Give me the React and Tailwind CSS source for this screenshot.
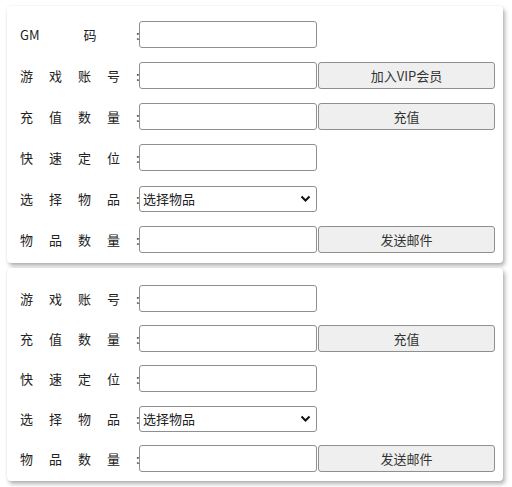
import React from 'react';

const font = { fontFamily: '"Noto Sans CJK SC", "Noto Sans", sans-serif' };

const Label = ({ chars, gm }) => (
  <div className="flex items-center w-[116px] shrink-0 text-[#222]">
    {gm ? (
      <div className="flex w-[100px]">
        <span>GM</span>
        <span className="ml-[44px]">码</span>
      </div>
    ) : (
      <div className="flex justify-between w-[100px]">
        {chars.split('').map((c, i) => (
          <span key={i}>{c}</span>
        ))}
      </div>
    )}
  </div>
);

const Colon = () => (
  <span className="w-[3px] shrink-0 text-[13px] leading-none">:</span>
);

const TextInput = () => (
  <input
    type="text"
    className="relative w-[178px] h-[27px] border border-[#8f8f8f] rounded-[3px] bg-white outline-none px-1 text-[13px]"
  />
);

const Button = ({ children }) => (
  <button className="w-[177px] h-[27px] border border-[#8f8f8f] rounded-[3px] bg-[#efefef] text-[13px] text-[#333] ml-[1px]">
    {children}
  </button>
);

const ItemSelect = () => (
  <div className="relative w-[178px] h-[26px]">
    <select
      className="appearance-none w-full h-full border border-[#8f8f8f] rounded-[3px] bg-white pl-[3px] text-[13px] text-[#222] outline-none"
      style={font}
      defaultValue=""
    >
      <option value="">选择物品</option>
    </select>
    <svg
      className="absolute right-[6px] top-[9px] pointer-events-none"
      width="11"
      height="8"
      viewBox="0 0 11 8"
    >
      <path d="M1.5 1.5 L5.5 5.5 L9.5 1.5" stroke="#111" strokeWidth="2" fill="none" />
    </svg>
  </div>
);

const Row = ({ label, gm, children }) => (
  <div className="flex items-center h-[27px]">
    <Label chars={label} gm={gm} />
    <Colon />
    {children}
  </div>
);

const Panel = ({ children, className }) => (
  <div
    className={`ml-[7px] w-[496px] bg-white rounded-[4px] pl-[13px] shadow-[2px_3px_4px_rgba(0,0,0,0.3),0_0_2px_rgba(0,0,0,0.08)] ${className}`}
  >
    {children}
  </div>
);

export default function App() {
  return (
    <div className="w-[512px] h-[487px] bg-white pt-[6px] text-[13px] text-[#333]" style={font}>
      <Panel className="pt-[15px] pb-[10px] flex flex-col gap-[14px]">
        <Row gm>
          <TextInput />
        </Row>
        <Row label="游戏账号">
          <TextInput />
          <Button>加入VIP会员</Button>
        </Row>
        <Row label="充值数量">
          <TextInput />
          <Button>充值</Button>
        </Row>
        <Row label="快速定位">
          <TextInput />
        </Row>
        <Row label="选择物品">
          <ItemSelect />
        </Row>
        <Row label="物品数量">
          <TextInput />
          <Button>发送邮件</Button>
        </Row>
      </Panel>
      <Panel className="mt-[5px] pt-[17px] pb-[9px] flex flex-col gap-[13px]">
        <Row label="游戏账号">
          <TextInput />
        </Row>
        <Row label="充值数量">
          <TextInput />
          <Button>充值</Button>
        </Row>
        <Row label="快速定位">
          <TextInput />
        </Row>
        <Row label="选择物品">
          <ItemSelect />
        </Row>
        <Row label="物品数量">
          <TextInput />
          <Button>发送邮件</Button>
        </Row>
      </Panel>
    </div>
  );
}
